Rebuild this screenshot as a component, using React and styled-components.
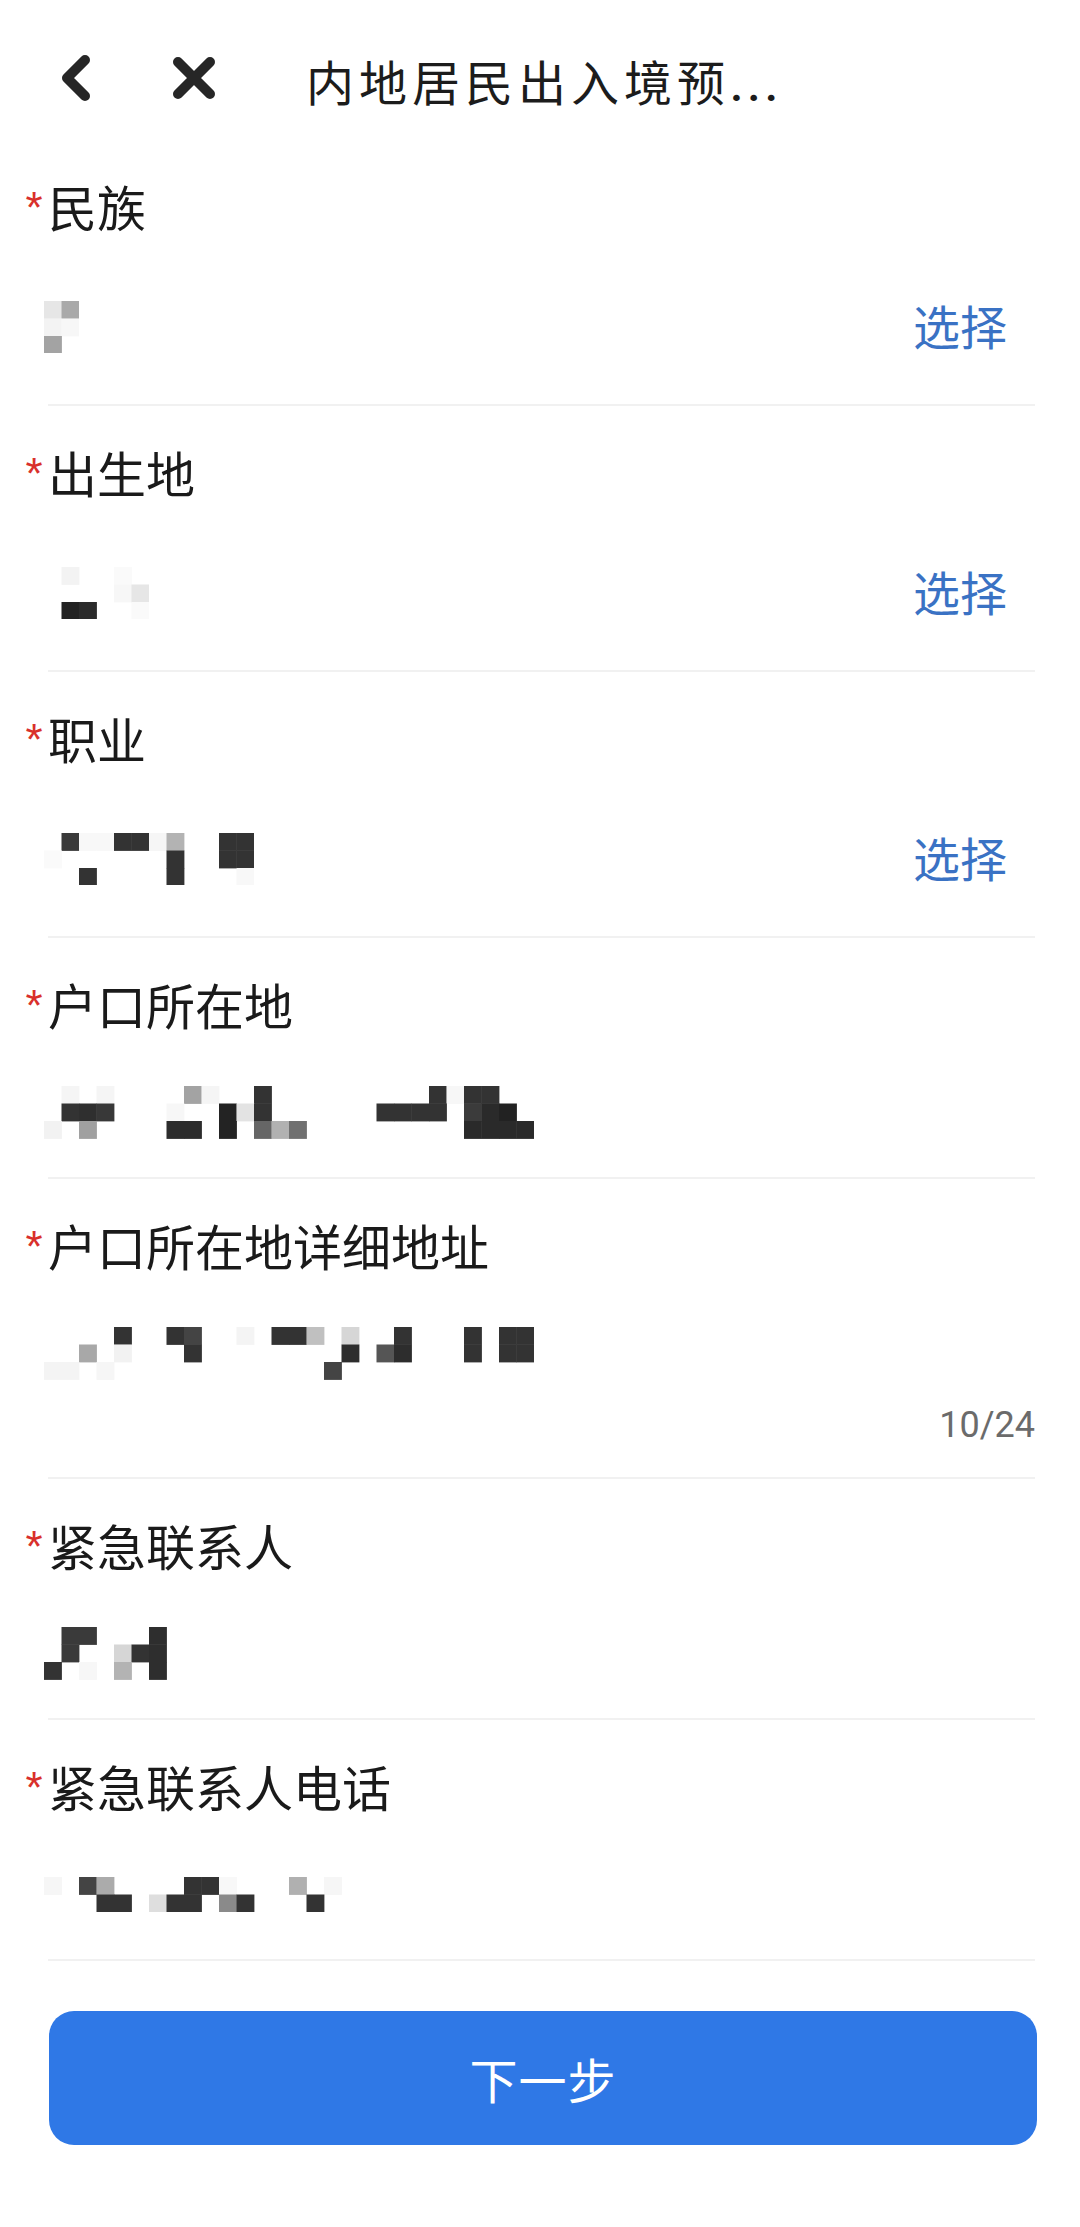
import React from 'react';
import styled, { createGlobalStyle } from 'styled-components';

const GlobalStyle = createGlobalStyle`
  html, body {
    margin: 0;
    padding: 0;
    background: #ffffff;
  }

  body {
    font-family: "Noto Sans CJK SC", "Noto Sans", sans-serif;
    color: #1c1c1c;
  }
`;

const Page = styled.div`
  width: 1080px;
  min-height: 2227px;
  background: #ffffff;
`;

const Header = styled.header`
  height: 140px;
  box-sizing: border-box;
  padding: 16px 0 0 58px;
  display: flex;
  align-items: center;
`;

const IconButton = styled.button`
  background: none;
  border: none;
  padding: 0;
  display: flex;
  color: #262626;
  margin-right: ${props => props.$gap}px;
`;

const Title = styled.h1`
  margin: 8px 0 0 0;
  font-size: 48px;
  font-weight: 400;
  letter-spacing: 5px;
  line-height: 56px;
  color: #1c1c1c;
  white-space: nowrap;
`;

const Dots = styled.span`
  letter-spacing: 4px;
  font-family: Roboto, "Noto Sans", sans-serif;
  font-weight: 500;
`;

const Field = styled.section`
  margin: 0 45px 0 48px;
  padding: 36px 0 17px 0;
  border-bottom: 2px solid #f1f1f1;
`;

const Label = styled.div`
  display: flex;
  margin-left: -28px;
  height: 60px;
  line-height: 60px;
  font-size: 49px;
  color: #1a1a1a;
`;

const Star = styled.span`
  width: 28px;
  text-align: center;
  font-family: "Liberation Sans", Arial, sans-serif;
  font-size: 44px;
  color: #d9302b;
  padding-top: 2px;
`;

const ValueRow = styled.div`
  margin-top: 31px;
  height: ${props => (props.$select ? 120 : 95)}px;
  display: flex;
  align-items: center;
  justify-content: space-between;
  padding-right: 28px;
`;

const MosaicSvg = styled.svg`
  margin-left: -4px;
  display: block;
`;

const SelectLink = styled.span`
  font-size: 47px;
  color: #3a72c4;
  line-height: 60px;
  margin-top: -4px;
`;

const Counter = styled.div`
  margin: 4px 0 15px 0;
  height: 40px;
  line-height: 40px;
  text-align: right;
  font-family: Roboto, "Noto Sans", sans-serif;
  font-size: 36px;
  color: #6b6b6b;
`;

const NextButton = styled.button`
  display: flex;
  align-items: center;
  justify-content: center;
  box-sizing: border-box;
  width: calc(100% - 92px);
  height: 134px;
  margin: 50px 43px 0 49px;
  border: none;
  border-radius: 25px;
  background: #2f78e6;
  color: #ffffff;
  font-family: "Noto Sans CJK SC", sans-serif;
  font-size: 48px;
  letter-spacing: 1px;
`;

const CELL = 17.5;

const Mosaic = ({ rows, cells }) => {
  const cols = Math.max(...cells.map(c => c[0])) + 1;
  return (
    <MosaicSvg width={cols * CELL} height={rows * CELL} viewBox={`0 0 ${cols * CELL} ${rows * CELL}`}>
      {cells.map(([c, r, fill], i) => (
        <rect key={i} x={c * CELL} y={r * CELL} width={CELL + 0.4} height={CELL + 0.4} fill={fill} />
      ))}
    </MosaicSvg>
  );
};

const BackIcon = () => (
  <svg width="40" height="56" viewBox="0 0 40 56">
    <polyline points="27,10 9,28 27,46" fill="none" stroke="currentColor" strokeWidth="10" strokeLinecap="round" strokeLinejoin="round" />
  </svg>
);

const CloseIcon = () => (
  <svg width="44" height="44" viewBox="0 0 44 44">
    <path d="M6 6 L38 38 M38 6 L6 38" fill="none" stroke="currentColor" strokeWidth="10" strokeLinecap="round" />
  </svg>
);

const D = '#333';

const fields = [
  {
    label: '民族', type: 'select', rows: 3,
    cells: [[0, 0, '#e6e6e6'], [1, 0, '#a9a9a9'], [0, 1, '#f3f3f3'], [1, 1, '#f7f7f7'], [0, 2, '#a3a3a3']],
  },
  {
    label: '出生地', type: 'select', rows: 3,
    cells: [[1, 0, '#f3f3f3'], [4, 0, '#fafafa'], [4, 1, '#f7f7f7'], [5, 1, '#e6e6e6'], [1, 2, '#222'], [2, 2, '#2b2b2b'], [5, 2, '#fafafa']],
  },
  {
    label: '职业', type: 'select', rows: 3,
    cells: [
      [1, 0, '#3a3a3a'], [2, 0, '#f8f8f8'], [3, 0, '#f8f8f8'], [4, 0, D], [5, 0, D], [6, 0, '#f6f6f6'], [7, 0, '#b3b3b3'], [10, 0, D], [11, 0, D],
      [0, 1, '#fafafa'], [7, 1, D], [10, 1, D], [11, 1, D],
      [2, 2, D], [7, 2, D], [11, 2, '#f8f8f8'],
    ],
  },
  {
    label: '户口所在地', type: 'input', rows: 3,
    cells: [
      [1, 0, '#f5f5f5'], [3, 0, '#f5f5f5'], [8, 0, '#a3a3a3'], [9, 0, '#f5f5f5'], [12, 0, D], [22, 0, D], [23, 0, '#f7f7f7'], [24, 0, D], [25, 0, D],
      [1, 1, D], [2, 1, '#2f2f2f'], [3, 1, '#383838'], [7, 1, '#f7f7f7'], [10, 1, '#232323'], [11, 1, '#e3e3e3'], [12, 1, D],
      [19, 1, D], [20, 1, D], [21, 1, D], [22, 1, D], [24, 1, '#3b3b3b'], [25, 1, '#2a2a2a'], [26, 1, '#222'],
      [0, 2, '#f2f2f2'], [2, 2, '#a0a0a0'], [7, 2, '#2c2c2c'], [8, 2, '#2c2c2c'], [10, 2, '#232323'], [12, 2, '#666'], [13, 2, '#b1b1b1'], [14, 2, '#707070'],
      [24, 2, '#2a2a2a'], [25, 2, '#2a2a2a'], [26, 2, '#2a2a2a'], [27, 2, '#2a2a2a'],
    ],
  },
  {
    label: '户口所在地详细地址', type: 'textarea', rows: 3, count: '10/24',
    cells: [
      [4, 0, D], [7, 0, D], [8, 0, '#444'], [11, 0, '#f4f4f4'], [13, 0, D], [14, 0, D], [15, 0, '#c0c0c0'], [17, 0, '#d6d6d6'], [20, 0, D], [24, 0, D], [26, 0, D], [27, 0, D],
      [2, 1, '#a8a8a8'], [4, 1, '#f2f2f2'], [8, 1, D], [17, 1, '#2d2d2d'], [19, 1, '#555'], [20, 1, '#2d2d2d'], [24, 1, D], [26, 1, D], [27, 1, D],
      [0, 2, '#f4f4f4'], [1, 2, '#f4f4f4'], [3, 2, '#f6f6f6'], [16, 2, '#444'],
    ],
  },
  {
    label: '紧急联系人', type: 'input', rows: 3,
    cells: [
      [1, 0, '#3a3a3a'], [2, 0, '#3a3a3a'], [6, 0, '#2e2e2e'],
      [1, 1, '#3a3a3a'], [4, 1, '#d6d6d6'], [5, 1, D], [6, 1, '#2e2e2e'],
      [0, 2, D], [2, 2, '#f7f7f7'], [4, 2, '#b3b3b3'], [6, 2, '#2e2e2e'],
    ],
  },
  {
    label: '紧急联系人电话', type: 'input', rows: 2,
    cells: [
      [0, 0, '#f6f6f6'], [2, 0, '#444'], [3, 0, '#ababab'], [8, 0, D], [9, 0, D], [10, 0, '#f8f8f8'], [14, 0, '#b0b0b0'], [16, 0, '#f6f6f6'],
      [3, 1, D], [4, 1, D], [6, 1, '#dedede'], [7, 1, D], [8, 1, D], [10, 1, '#8a8a8a'], [11, 1, D], [15, 1, D],
    ],
  },
];

const App = () => {
  return (
    <Page>
      <GlobalStyle />
      <Header>
        <IconButton $gap={74} aria-label="返回">
          <BackIcon />
        </IconButton>
        <IconButton $gap={90} aria-label="关闭">
          <CloseIcon />
        </IconButton>
        <Title>
          内地居民出入境预<Dots>...</Dots>
        </Title>
      </Header>

      {fields.map(field => (
        <Field key={field.label}>
          <Label>
            <Star>*</Star>
            {field.label}
          </Label>
          <ValueRow $select={field.type === 'select'}>
            <Mosaic rows={field.rows} cells={field.cells} />
            {field.type === 'select' && <SelectLink>选择</SelectLink>}
          </ValueRow>
          {field.count && <Counter>{field.count}</Counter>}
        </Field>
      ))}

      <NextButton>下一步</NextButton>
    </Page>
  );
};

export default App;
